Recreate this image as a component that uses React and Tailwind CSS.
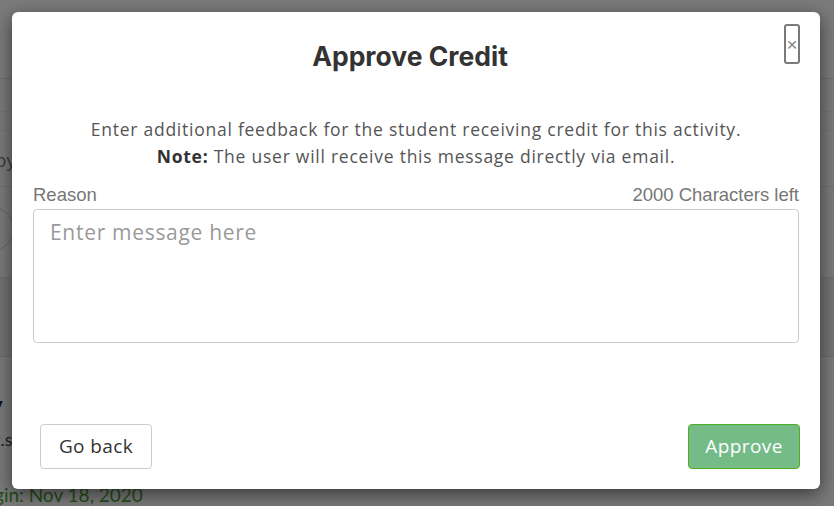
import React from "react";

export default function App() {
  return (
    <div className="relative w-[834px] h-[506px] overflow-hidden bg-[#7a7a7a]" style={{ fontFamily: "'Open Sans', 'Noto Sans', sans-serif" }}>
      {/* dimmed page behind */}
      <div className="flex flex-col w-full h-full">
        <div className="h-[80px] bg-[#7b7b7b] border-b border-[#6f6f6f]"></div>
        <div className="h-[34px] border-b border-[#737373]"></div>
        <div className="h-[19px] border-b border-[#737373]"></div>
        <div className="h-[57px] border-b border-[#6f6f6f] flex items-center">
          <span className="ml-[-5px] mt-[4px] text-[19px] text-[#3a3a3a]">oy</span>
        </div>
        <div className="h-[93px] border-b border-[#6f6f6f] flex items-center">
          <div className="ml-[-30px] mt-[-6px] w-[44px] h-[44px] rounded-full border border-[#666]"></div>
        </div>
        <div className="h-[80px] bg-[#737373] border-b border-[#6c6c6c]"></div>
        <div className="flex-1 flex flex-col" style={{ fontFamily: "Lato, sans-serif" }}>
          <span className="mt-[34px] ml-[-10px] text-[24px] font-bold leading-[28px] text-[#111]">y</span>
          <span className="mt-[8px] ml-[-6px] text-[18px] leading-[24px] text-[#222]">t.s</span>
          <span className="mt-[33px] ml-[-6px] text-[19px] leading-[22px] text-[#244d1c]">gin: Nov 18, 2020</span>
        </div>
      </div>

      {/* modal */}
      <div className="absolute left-[12px] top-[12px] w-[808px] h-[477px] bg-white rounded-[6px] shadow-[0_5px_18px_rgba(0,0,0,0.55)] flex flex-col">
        <button className="absolute right-[20px] top-[12px] w-[16px] h-[40px] rounded-[3px] border-2 border-[#7a7a7a] flex items-center justify-center text-[#888] text-[19px] leading-none bg-white" style={{ fontFamily: "'Liberation Sans', Arial, sans-serif" }}>
          ×
        </button>
        <h1 className="pt-[28px] pr-[12px] text-center text-[26.5px] leading-[32px] font-bold text-[#333]" style={{ fontFamily: "Inter, 'Liberation Sans', sans-serif" }}>
          Approve Credit
        </h1>
        <div className="mt-[44px] text-center text-[17.5px] leading-[27px] text-[#555] tracking-[0.75px]">
          <p>Enter additional feedback for the student receiving credit for this activity.</p>
          <p>
            <span className="font-bold text-[#333]">Note:</span> The user will receive this message directly via email.
          </p>
        </div>
        <div className="mx-[21px] mt-[15px] flex justify-between text-[18.5px] leading-[20px] text-[#777]" style={{ fontFamily: "'Liberation Sans', Arial, sans-serif" }}>
          <span>Reason</span>
          <span>2000 Characters left</span>
        </div>
        <div className="mx-[21px] mt-[4px] h-[134px] rounded-[4px] border border-[#cccccc] px-[16px] pt-[8px]">
          <span className="text-[21px] leading-[28px] text-[#9a9a9a] tracking-[0.7px]">Enter message here</span>
        </div>
        <div className="mt-auto pb-[20px] pl-[28px] pr-[20px] flex justify-between">
          <button className="w-[112px] h-[45px] rounded-[4px] border border-[#cccccc] bg-white text-[19px] tracking-[0.4px] text-[#333]">
            Go back
          </button>
          <button className="w-[112px] h-[45px] rounded-[4px] border border-[#4cb01f] bg-[#74bb88] text-[19px] tracking-[0.4px] text-white">
            Approve
          </button>
        </div>
      </div>
    </div>
  );
}
